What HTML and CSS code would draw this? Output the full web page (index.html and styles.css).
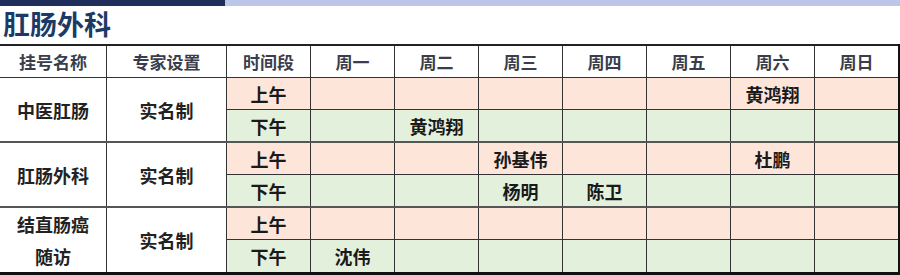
FILE: index.html
```html
<!DOCTYPE html>
<html lang="zh">
<head>
    <meta charset="UTF-8">
    <title>肛肠外科</title>
    <link rel="stylesheet" href="styles.css">
</head>
<body>
    <div class="topbar"><div class="topbar-dark"></div></div>
    <h1 class="title">肛肠外科</h1>
    <table class="schedule">
        <thead>
            <tr>
                <th class="c-name">挂号名称</th>
                <th class="c-set">专家设置</th>
                <th class="c-time">时间段</th>
                <th>周一</th>
                <th>周二</th>
                <th>周三</th>
                <th>周四</th>
                <th>周五</th>
                <th>周六</th>
                <th>周日</th>
            </tr>
        </thead>
        <tbody>
            <tr class="am">
                <td rowspan="2" class="plain">中医肛肠</td>
                <td rowspan="2" class="plain">实名制</td>
                <td>上午</td>
                <td></td><td></td><td></td><td></td><td></td><td>黄鸿翔</td><td></td>
            </tr>
            <tr class="pm">
                <td>下午</td>
                <td></td><td>黄鸿翔</td><td></td><td></td><td></td><td></td><td></td>
            </tr>
            <tr class="am group">
                <td rowspan="2" class="plain">肛肠外科</td>
                <td rowspan="2" class="plain">实名制</td>
                <td>上午</td>
                <td></td><td></td><td>孙基伟</td><td></td><td></td><td>杜鹏</td><td></td>
            </tr>
            <tr class="pm">
                <td>下午</td>
                <td></td><td></td><td>杨明</td><td>陈卫</td><td></td><td></td><td></td>
            </tr>
            <tr class="am group">
                <td rowspan="2" class="plain two-line">结直肠癌<br>随访</td>
                <td rowspan="2" class="plain">实名制</td>
                <td>上午</td>
                <td></td><td></td><td></td><td></td><td></td><td></td><td></td>
            </tr>
            <tr class="pm">
                <td>下午</td>
                <td>沈伟</td><td></td><td></td><td></td><td></td><td></td><td></td>
            </tr>
        </tbody>
    </table>
</body>
</html>
```

FILE: styles.css
```css
body {
    margin: 0;
    background-color: #fff;
    font-family: "Noto Sans CJK SC", "Noto Sans", sans-serif;
    width: 900px;
    height: 275px;
    overflow: hidden;
}

.topbar {
    height: 6px;
    background-color: #bcc6e6;
}

.topbar-dark {
    width: 225px;
    height: 6px;
    background-color: #1f2d5a;
}

.title {
    margin: 0;
    padding-left: 3px;
    height: 38px;
    line-height: 36px;
    font-size: 27px;
    font-weight: bold;
    color: #1d3a66;
}

.schedule {
    width: 899px;
    border-collapse: collapse;
    table-layout: fixed;
    font-size: 18px;
    font-weight: bold;
    color: #1a1a1a;
    border-top: 2px solid #222;
    border-bottom: 3px solid #111;
    border-right: 3px solid #111;
}

.schedule th,
.schedule td {
    border: 1px solid #333;
    height: 31px;
    padding: 0;
    text-align: center;
    line-height: 20px;
}

.schedule th {
    height: 31px;
    width: 83px;
    font-size: 17px;
    color: #3a3d4c;
    background-color: #fff;
}

.schedule th:first-child,
.schedule td.plain:first-child {
    border-left: none;
}

.schedule th.c-name {
    width: 106px;
}

.schedule th.c-set {
    width: 119px;
}

.schedule tr.am td {
    background-color: #fde5da;
}

.schedule tr.pm td {
    background-color: #e3f0dc;
}

.schedule tr.group td {
    border-top: 2px solid #555;
}

.schedule td.plain {
    background-color: #fff !important;
    color: #222;
}

.schedule td.two-line {
    line-height: 32px;
}
```
